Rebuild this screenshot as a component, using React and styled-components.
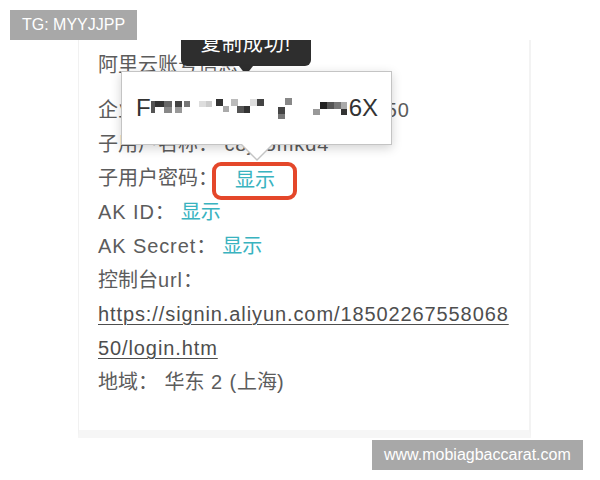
import React from 'react';
import styled, { createGlobalStyle } from 'styled-components';

const GlobalStyle = createGlobalStyle`
  html, body {
    margin: 0;
    padding: 0;
    background: #ffffff;
  }
  body {
    font-family: "Liberation Sans", "Noto Sans CJK SC", sans-serif;
  }
`;

const Page = styled.div`
  position: relative;
  width: 600px;
  height: 480px;
  overflow: hidden;
  background: #ffffff;
  padding: 40px 0 0 78px;
  box-sizing: border-box;
`;

const Card = styled.div`
  position: relative;
  width: 453px;
  height: 398px;
  box-sizing: border-box;
  overflow: hidden;
  background: #ffffff;
  border-left: 1px solid #f1f1f1;
  border-right: 2px solid #f3f3f3;
  border-bottom: 8px solid #f6f6f6;
  padding: 8px 0 0 19px;
  color: #5c5c5c;
  font-size: 20px;
`;

const Heading = styled.div`
  line-height: 34px;
  margin-bottom: 11px;
`;

const Row = styled.div`
  line-height: 34px;
  white-space: nowrap;
`;

const Latin = styled.span`
  letter-spacing: 0.9px;
`;

const Link = styled.span`
  color: #39b3bf;
  margin-left: ${({ gap }) => gap ?? 6}px;
`;

const UrlLine = styled.div`
  display: ${({ inline }) => (inline ? 'inline-block' : 'block')};
  line-height: 34px;
  color: #4e4e4e;
  letter-spacing: 0.9px;
  text-decoration: underline;
  text-decoration-thickness: 1px;
  text-underline-offset: 3px;
  white-space: nowrap;
`;

const Highlight = styled.span`
  display: inline-block;
  box-sizing: border-box;
  height: 38px;
  border: 4px solid #e4472a;
  border-radius: 9px;
  padding: 0 18px 0 19px;
  margin: -10px 0 -10px -6px;
  line-height: 28px;
  vertical-align: middle;
  position: relative;
  top: 1px;
`;

const Toast = styled.div`
  position: absolute;
  left: 102px;
  top: -18px;
  width: 130px;
  height: 44px;
  background: #2e2e2e;
  border-radius: 0 0 6px 6px;
  color: #ffffff;
  font-size: 20px;
  line-height: 44px;
  text-align: center;
  letter-spacing: 1px;
  &::after {
    content: '';
    position: absolute;
    left: 58px;
    top: 44px;
    border-left: 7px solid transparent;
    border-right: 7px solid transparent;
    border-top: 9px solid #2e2e2e;
  }
`;

const Popup = styled.div`
  position: absolute;
  left: 42px;
  top: 31px;
  width: 271px;
  height: 74px;
  box-sizing: border-box;
  background: #ffffff;
  border: 1px solid #c4c4c4;
  box-shadow: 0 3px 10px rgba(0, 0, 0, 0.18);
  display: flex;
  align-items: center;
  padding-left: 14px;
  font-size: 24px;
  color: #333333;
  &::before {
    content: '';
    position: absolute;
    left: 119px;
    top: 73px;
    border-left: 16px solid transparent;
    border-right: 16px solid transparent;
    border-top: 16px solid #c4c4c4;
  }
  &::after {
    content: '';
    position: absolute;
    left: 120px;
    top: 72px;
    border-left: 15px solid transparent;
    border-right: 15px solid transparent;
    border-top: 15px solid #ffffff;
  }
`;

const Secret = styled.span`
  display: inline-flex;
  align-items: center;
`;

const Badge = styled.div`
  position: absolute;
  left: ${({ left }) => left}px;
  top: ${({ top }) => top}px;
  height: 30px;
  padding: 0 12px;
  background: #a8a8a8;
  color: #ffffff;
  font-size: 16px;
  line-height: 30px;
  white-space: nowrap;
`;

const blocks = [
  [0, 6, 4, 12, '#555'],
  [4, 6, 9, 6, '#333'],
  [13, 6, 8, 6, '#666'],
  [13, 12, 8, 6, '#888'],
  [24, 6, 7, 6, '#444'],
  [24, 12, 7, 6, '#999'],
  [33, 6, 6, 6, '#777'],
  [48, 6, 7, 6, '#ddd'],
  [55, 6, 6, 6, '#ccc'],
  [65, 4, 7, 7, '#333'],
  [72, 11, 6, 6, '#aaa'],
  [80, 4, 7, 7, '#bbb'],
  [86, 11, 7, 7, '#555'],
  [93, 11, 6, 7, '#333'],
  [99, 4, 7, 7, '#ddd'],
  [106, 4, 7, 7, '#444'],
  [134, 3, 7, 7, '#888'],
  [127, 12, 7, 7, '#444'],
  [127, 19, 7, 5, '#777'],
  [162, 14, 7, 6, '#999'],
  [169, 7, 7, 7, '#222'],
  [176, 7, 7, 7, '#555'],
  [183, 7, 7, 7, '#777'],
  [190, 7, 6, 7, '#aaa'],
  [190, 14, 6, 6, '#333'],
];

const Mosaic = () => (
  <svg width="198" height="26" viewBox="0 0 198 26">
    {blocks.map(([x, y, w, h, c], i) => (
      <rect key={i} x={x} y={y} width={w} height={h} fill={c} />
    ))}
  </svg>
);

export default function App() {
  return (
    <>
      <GlobalStyle />
      <Page>
        <Card>
          <Heading>阿里云账号信息</Heading>
          <Row>
            企业别名：<Latin>&nbsp;&nbsp;&nbsp;1850226755806850</Latin>
          </Row>
          <Row>
            子用户名称：<Latin>&nbsp;c8jq5mkd4</Latin>
          </Row>
          <Row>
            子用户密码：
            <Highlight>
              <Link gap={0}>显示</Link>
            </Highlight>
          </Row>
          <Row>
            <Latin>AK ID</Latin>：<Link>显示</Link>
          </Row>
          <Row>
            <Latin>AK Secret</Latin>：<Link>显示</Link>
          </Row>
          <Row>
            控制台<Latin>url</Latin>：
          </Row>
          <UrlLine>https://signin.aliyun.com/18502267558068</UrlLine>
          <UrlLine inline>50/login.htm</UrlLine>
          <Row>
            地域：<Latin>&nbsp;</Latin>华东<Latin> 2 (</Latin>上海<Latin>)</Latin>
          </Row>

          <Toast>复制成功!</Toast>
          <Popup>
            <Secret>
              F<Mosaic />
              6X
            </Secret>
          </Popup>
        </Card>
        <Badge left={10} top={10}>TG: MYYJJPP</Badge>
        <Badge left={372} top={440}>www.mobiagbaccarat.com</Badge>
      </Page>
    </>
  );
}
